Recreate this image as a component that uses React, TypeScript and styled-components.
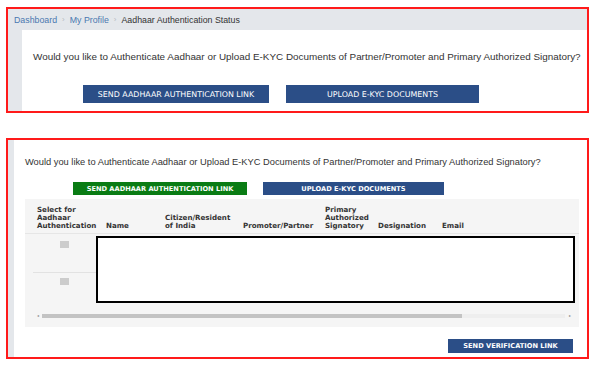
import styled, { createGlobalStyle } from "styled-components";

const GlobalStyle = createGlobalStyle`
  html, body {
    margin: 0;
    padding: 0;
    background: #ffffff;
  }
  body {
    font-family: "Liberation Sans", Arial, sans-serif;
    color: #333333;
  }
`;

const headers = [
  { label: "Select for\nAadhaar\nAuthentication", width: 69 },
  { label: "Name", width: 59 },
  { label: "Citizen/Resident\nof India", width: 78 },
  { label: "Promoter/Partner", width: 82 },
  { label: "Primary\nAuthorized\nSignatory", width: 53 },
  { label: "Designation", width: 64 },
  { label: "Email", width: 60 },
];

const App = () => {
  return (
    <>
      <GlobalStyle />
      <Page>
        <TopPanel>
          <Breadcrumb>
            <Crumb $link>Dashboard</Crumb>
            <Sep>›</Sep>
            <Crumb $link>My Profile</Crumb>
            <Sep>›</Sep>
            <Crumb>Aadhaar Authentication Status</Crumb>
          </Breadcrumb>
          <TopBody>
            <Gutter $width={14} />
            <TopContent>
              <Question>
                Would you like to Authenticate Aadhaar or Upload E-KYC Documents of
                Partner/Promoter and Primary Authorized Signatory?
              </Question>
              <TopButtons>
                <BigButton $width={186}>SEND AADHAAR AUTHENTICATION LINK</BigButton>
                <BigButton $width={193}>UPLOAD E-KYC DOCUMENTS</BigButton>
              </TopButtons>
            </TopContent>
          </TopBody>
        </TopPanel>

        <BottomPanel>
          <Gutter $width={6} />
          <BottomContent>
            <SmallQuestion>
              Would you like to Authenticate Aadhaar or Upload E-KYC Documents of
              Partner/Promoter and Primary Authorized Signatory?
            </SmallQuestion>
            <SmallButtons>
              <SmallButton $green $width={174}>
                SEND AADHAAR AUTHENTICATION LINK
              </SmallButton>
              <SmallButton $width={181}>UPLOAD E-KYC DOCUMENTS</SmallButton>
            </SmallButtons>
            <TableBox>
              <HeaderRow>
                {headers.map((h) => (
                  <HeaderCell key={h.label} $width={h.width}>
                    {h.label}
                  </HeaderCell>
                ))}
              </HeaderRow>
              <TableBody>
                <CheckColumn>
                  <CheckRow $height={37} $divider>
                    <CheckBox />
                  </CheckRow>
                  <CheckRow $height={30}>
                    <CheckBox />
                  </CheckRow>
                </CheckColumn>
                <Redacted />
              </TableBody>
              <ScrollBar>
                <Arrow>◂</Arrow>
                <Track>
                  <Thumb />
                </Track>
                <Arrow>▸</Arrow>
              </ScrollBar>
            </TableBox>
            <Footer>
              <SmallButton $width={125} $height={14}>
                SEND VERIFICATION LINK
              </SmallButton>
            </Footer>
          </BottomContent>
        </BottomPanel>
      </Page>
    </>
  );
};

export default App;

const Page = styled.div`
  width: 600px;
  height: 365px;
  padding: 7px 0 0 6px;
  box-sizing: border-box;
  display: flex;
  flex-direction: column;
  gap: 25px;
`;

const Panel = styled.div`
  width: 583px;
  box-sizing: border-box;
  border: 2px solid #ff1a1a;
  background: #ffffff;
  overflow: hidden;
`;

const TopPanel = styled(Panel)`
  height: 106px;
  display: flex;
  flex-direction: column;
`;

const Breadcrumb = styled.div`
  height: 21px;
  background: #e4e7eb;
  display: flex;
  align-items: center;
  padding-left: 6px;
  gap: 5px;
  font-size: 8.8px;
`;

const Crumb = styled.span<{ $link?: boolean }>`
  color: ${(p) => (p.$link ? "#4a78b0" : "#333333")};
`;

const Sep = styled.span`
  color: #b8bcc2;
  font-size: 8px;
`;

const TopBody = styled.div`
  flex: 1;
  display: flex;
`;

const Gutter = styled.div<{ $width: number }>`
  width: ${(p) => p.$width}px;
  background: #e4e7eb;
  flex-shrink: 0;
`;

const TopContent = styled.div`
  flex: 1;
  min-width: 0;
  padding: 21px 0 0 11px;
  display: flex;
  flex-direction: column;
`;

const Question = styled.div`
  font-size: 9.9px;
  line-height: 11px;
  color: #333333;
  white-space: nowrap;
`;

const TopButtons = styled.div`
  display: flex;
  gap: 17px;
  margin: 23px 0 0 50px;
`;

const BigButton = styled.div<{ $width: number }>`
  width: ${(p) => p.$width}px;
  height: 18px;
  background: #2b4e87;
  color: #ffffff;
  font-family: "DejaVu Sans", Verdana, sans-serif;
  font-size: 7.9px;
  display: flex;
  align-items: center;
  justify-content: center;
  white-space: nowrap;
`;

const BottomPanel = styled(Panel)`
  height: 221px;
  display: flex;
`;

const BottomContent = styled.div`
  flex: 1;
  min-width: 0;
  padding: 17px 8px 0 11px;
  display: flex;
  flex-direction: column;
`;

const SmallQuestion = styled.div`
  font-size: 9.3px;
  line-height: 10px;
  color: #333333;
  white-space: nowrap;
`;

const SmallButtons = styled.div`
  display: flex;
  gap: 16px;
  margin: 15px 0 0 48px;
`;

const SmallButton = styled.div<{ $width: number; $height?: number; $green?: boolean }>`
  width: ${(p) => p.$width}px;
  height: ${(p) => p.$height ?? 13}px;
  background: ${(p) => (p.$green ? "#0a7c14" : "#2b4e87")};
  border: 1px solid ${(p) => (p.$green ? "#0a7c14" : "#2b4e87")};
  box-sizing: border-box;
  color: #ffffff;
  font-family: "DejaVu Sans", Verdana, sans-serif;
  font-weight: bold;
  font-size: 6.65px;
  display: flex;
  align-items: center;
  justify-content: center;
  white-space: nowrap;
`;

const TableBox = styled.div`
  margin-top: 4px;
  height: 128px;
  background: #f5f5f5;
  display: flex;
  flex-direction: column;
`;

const HeaderRow = styled.div`
  display: flex;
  align-items: flex-end;
  padding: 8px 0 0 12px;
  height: 35px;
  box-sizing: border-box;
  border-bottom: 1px solid #e6e6e6;
  margin-bottom: 2px;
`;

const HeaderCell = styled.div<{ $width: number }>`
  width: ${(p) => p.$width}px;
  flex-shrink: 0;
  white-space: pre-line;
  font-family: "DejaVu Sans", Verdana, sans-serif;
  font-weight: bold;
  font-size: 7.1px;
  line-height: 8px;
  color: #333333;
  padding-bottom: 3px;
`;

const TableBody = styled.div`
  display: flex;
  height: 67px;
  padding-right: 4px;
`;

const CheckColumn = styled.div`
  width: 71px;
  display: flex;
  flex-direction: column;
  padding-left: 8px;
  box-sizing: border-box;
`;

const CheckRow = styled.div<{ $height: number; $divider?: boolean }>`
  height: ${(p) => p.$height}px;
  border-bottom: ${(p) => (p.$divider ? "1px solid #e2e2e2" : "none")};
  display: flex;
  justify-content: center;
  padding: 5px 0 0 0;
  box-sizing: border-box;
`;

const CheckBox = styled.div`
  width: 9px;
  height: 7px;
  background: #cccccc;
`;

const Redacted = styled.div`
  flex: 1;
  border: 2px solid #000000;
  background: #ffffff;
`;

const ScrollBar = styled.div`
  margin: 10px 7px 0 10px;
  height: 5px;
  display: flex;
  align-items: center;
  gap: 2px;
`;

const Arrow = styled.span`
  font-size: 4px;
  color: #888888;
  width: 5px;
  text-align: center;
`;

const Track = styled.div`
  flex: 1;
  height: 4px;
  background: #eeeeee;
`;

const Thumb = styled.div`
  width: 420px;
  height: 100%;
  background: #c3c3c3;
`;

const Footer = styled.div`
  display: flex;
  justify-content: flex-end;
  margin: 12px 6px 0 0;
`;
